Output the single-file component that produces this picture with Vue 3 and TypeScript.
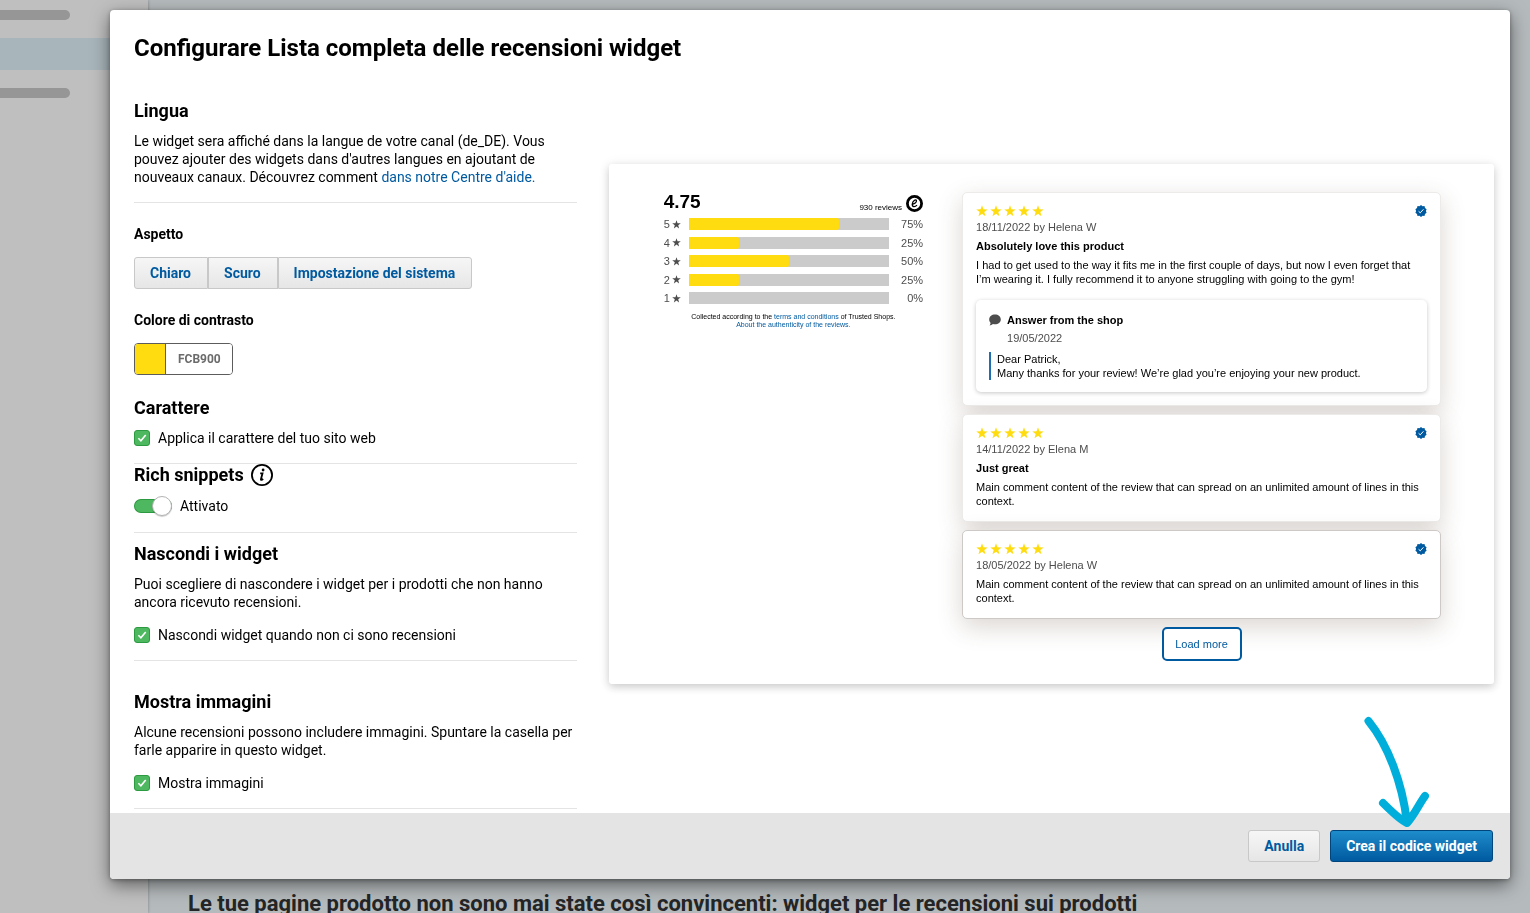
<script setup lang="ts">
import { ref } from 'vue'

interface Review {
  meta: string
  title?: string
  text: string
  answer?: { date: string; lines: string[] }
  outlined?: boolean
}

const themes = ['Chiaro', 'Scuro', 'Impostazione del sistema']
const useSiteFont = ref(true)
const richSnippets = ref(true)
const hideEmpty = ref(true)
const showImages = ref(true)
const contrast = ref('FCB900')

const ratings = [
  { stars: 5, percent: 75 },
  { stars: 4, percent: 25 },
  { stars: 3, percent: 50 },
  { stars: 2, percent: 25 },
  { stars: 1, percent: 0 },
]

const comment = 'Main comment content of the review that can spread on an unlimited amount of lines in this context.'
const reviews: Review[] = [
  {
    meta: '18/11/2022 by Helena W',
    title: 'Absolutely love this product',
    text: 'I had to get used to the way it fits me in the first couple of days, but now I even forget that I’m wearing it. I fully recommend it to anyone struggling with going to the gym!',
    answer: {
      date: '19/05/2022',
      lines: ['Dear Patrick,', 'Many thanks for your review! We’re glad you’re enjoying your new product.'],
    },
  },
  { meta: '14/11/2022 by Elena M', title: 'Just great', text: comment },
  { meta: '18/05/2022 by Helena W', text: comment, outlined: true },
]

const starPath = 'M6 0.3 L7.4 4.3 L11.7 4.4 L8.3 7 L9.5 11.2 L6 8.7 L2.5 11.2 L3.7 7 L0.3 4.4 L4.6 4.3 Z'
</script>

<template>
  <div class="page">
    <aside class="sidebar">
      <span class="stub"></span>
      <span class="active"></span>
      <span class="stub"></span>
    </aside>
    <main class="content">
      <h1>Le tue pagine prodotto non sono mai state così convincenti: widget per le recensioni sui prodotti</h1>
    </main>

    <div class="overlay">
      <div class="dialog" role="dialog" aria-labelledby="dialog-title">
        <header class="head">
          <h2 id="dialog-title">Configurare Lista completa delle recensioni widget</h2>
        </header>

        <div class="body">
          <form class="settings" @submit.prevent>
            <section class="ruled">
              <h3>Lingua</h3>
              <p>
                Le widget sera affiché dans la langue de votre canal (de_DE). Vous pouvez ajouter des widgets dans
                d'autres langues en ajoutant de nouveaux canaux. Découvrez comment
                <a href="#">dans notre Centre d'aide.</a>
              </p>
            </section>

            <section class="field">
              <h4>Aspetto</h4>
              <div class="segments">
                <button v-for="t in themes" :key="t" type="button">{{ t }}</button>
              </div>
            </section>

            <section class="field">
              <h4><label for="contrast">Colore di contrasto</label></h4>
              <div class="color">
                <span class="swatch"></span>
                <input id="contrast" v-model="contrast" type="text" />
              </div>
            </section>

            <section class="ruled font">
              <h3>Carattere</h3>
              <label class="check"><input v-model="useSiteFont" type="checkbox" /><svg viewBox="0 0 16 16"><path d="M4.4 8.2 L6.9 10.8 L11.7 4.9" /></svg>Applica il carattere del tuo sito web</label>
            </section>

            <section class="ruled">
              <h3 class="with-icon">
                Rich snippets
                <svg class="info" viewBox="0 0 22 22">
                  <circle cx="11" cy="11" r="10.1" />
                  <circle class="solid" cx="12.1" cy="6" r="1.4" />
                  <path d="M9.2 9.3 H11.5 L9.9 15.4 Q9.8 16.6 12.2 15" />
                </svg>
              </h3>
              <label class="toggle"><input v-model="richSnippets" type="checkbox" role="switch" /><span class="track"></span>Attivato</label>
            </section>

            <section class="ruled hide">
              <h3>Nascondi i widget</h3>
              <p>Puoi scegliere di nascondere i widget per i prodotti che non hanno ancora ricevuto recensioni.</p>
              <label class="check"><input v-model="hideEmpty" type="checkbox" /><svg viewBox="0 0 16 16"><path d="M4.4 8.2 L6.9 10.8 L11.7 4.9" /></svg>Nascondi widget quando non ci sono recensioni</label>
            </section>

            <section class="ruled images">
              <h3>Mostra immagini</h3>
              <p>Alcune recensioni possono includere immagini. Spuntare la casella per farle apparire in questo widget.</p>
              <label class="check"><input v-model="showImages" type="checkbox" /><svg viewBox="0 0 16 16"><path d="M4.4 8.2 L6.9 10.8 L11.7 4.9" /></svg>Mostra immagini</label>
            </section>
          </form>

          <div class="preview">
            <div class="summary">
              <div class="score">
                <strong>4.75</strong>
                <span>930 reviews</span>
                <svg class="mark" viewBox="0 0 17 17">
                  <circle cx="8.5" cy="8.5" r="7.1" />
                  <path d="M5.6 9.3 C8.6 9.2 10.8 7.4 10.4 5.5 C9.9 4 6.5 5.8 6.3 9.2 C6.2 12.3 9 12.1 11 10.1" />
                </svg>
              </div>
              <div class="bars">
                <div v-for="r in ratings" :key="r.stars" class="bar-row">
                  <span class="bar-label">{{ r.stars }}<svg viewBox="0 0 12 12"><path :d="starPath" /></svg></span>
                  <span class="bar"><span class="fill" :style="{ width: r.percent + '%' }"></span></span>
                  <span class="percent">{{ r.percent }}%</span>
                </div>
              </div>
              <p class="legal">
                Collected according to the <a href="#">terms and conditions</a> of Trusted Shops.<br />
                <a href="#">About the authenticity of the reviews.</a>
              </p>
            </div>

            <div class="reviews">
              <article v-for="r in reviews" :key="r.meta" class="review" :class="{ outlined: r.outlined }">
                <div class="top">
                  <span class="stars">
                    <svg v-for="n in 5" :key="n" viewBox="0 0 12 12"><path :d="starPath" /></svg>
                  </span>
                  <svg class="verified" viewBox="0 0 12 12">
                    <path d="M6 0 L7.5 1.3 L9.5 1 L10 2.9 L11.6 4.2 L10.9 6 L11.6 7.8 L10 9.1 L9.5 11 L7.5 10.7 L6 12 L4.5 10.7 L2.5 11 L2 9.1 L0.4 7.8 L1.1 6 L0.4 4.2 L2 2.9 L2.5 1 L4.5 1.3 Z" />
                    <path class="tick" d="M3.6 6.3 L5.3 7.8 L8.4 4.3" />
                  </svg>
                </div>
                <div class="meta">{{ r.meta }}</div>
                <h5 v-if="r.title">{{ r.title }}</h5>
                <p>{{ r.text }}</p>
                <div v-if="r.answer" class="answer">
                  <svg viewBox="0 0 12 12"><path d="M6 0.5 C9.3 0.5 11.8 2.6 11.8 5.4 C11.8 8.2 9.3 10.3 6 10.3 C5.3 10.3 4.6 10.2 4 10 C3 10.9 1.6 11.4 0.6 11.4 C1.3 10.6 1.6 9.7 1.6 8.8 C0.7 7.9 0.2 6.7 0.2 5.4 C0.2 2.6 2.7 0.5 6 0.5 Z" /></svg>
                  <div class="answer-head">
                    <strong>Answer from the shop</strong>
                    <span>{{ r.answer.date }}</span>
                  </div>
                  <blockquote>
                    <div v-for="line in r.answer.lines" :key="line">{{ line }}</div>
                  </blockquote>
                </div>
              </article>
              <button class="more" type="button">Load more</button>
            </div>
          </div>
        </div>

        <footer class="foot">
          <button class="cancel" type="button">Anulla</button>
          <button class="create" type="button">Crea il codice widget</button>
          <svg class="arrow" viewBox="0 0 66 112">
            <path d="M4.5 5 C24 29 38 66 43 106 M19 87 C28 96 36 104 43 107 C51 98 55 88 61 80" />
          </svg>
        </footer>
      </div>
    </div>
  </div>
</template>

<style>
body {
  margin: 0;
}
</style>

<style scoped>
*, *::after {
  box-sizing: border-box;
}
h1, h2, h3, h4, h5, p, blockquote {
  margin: 0;
}
button, input {
  font: inherit;
}
a {
  color: #005aa0;
  text-decoration: none;
}
.page {
  display: flex;
  height: 100vh;
  overflow: hidden;
  font-family: Roboto, "Liberation Sans", sans-serif;
  font-size: 14px;
  line-height: 18px;
  color: #000;
  background: #b5babc;
}
.sidebar {
  display: flex;
  flex-direction: column;
  gap: 18px;
  width: 148px;
  padding-top: 10px;
  background: #bfbfbf;
  box-shadow: 0 0 3px rgba(0, 0, 0, 0.3);
}
.stub {
  width: 70px;
  height: 10px;
  border-radius: 0 5px 5px 0;
  background: #969696;
}
.active {
  height: 32px;
  background: #a8b5ba;
}
.content {
  flex: 1;
  display: flex;
  flex-direction: column;
  justify-content: flex-end;
  padding-left: 40px;
}
.content h1 {
  font-size: 22px;
  line-height: 18px;
  color: #242526;
  white-space: nowrap;
}
.overlay {
  position: fixed;
  inset: 0;
  display: flex;
  padding: 10px 20px 34px 110px;
}
.dialog {
  position: relative;
  flex: 1;
  display: flex;
  flex-direction: column;
  min-width: 0;
  border-radius: 4px;
  background: #fff;
  box-shadow: 0 6px 18px rgba(0, 0, 0, 0.5), 0 1px 4px rgba(0, 0, 0, 0.3);
}
.head {
  padding: 24px 24px 38px;
}
.head h2 {
  font-size: 24px;
  line-height: 28px;
}
.body {
  flex: 1;
  min-height: 0;
  overflow: hidden;
  display: grid;
  grid-template-columns: 1fr 2fr;
  align-items: start;
  gap: 32px;
  padding: 0 16px 0 24px;
}
h3 {
  margin-bottom: 10px;
  font-size: 18px;
  line-height: 22px;
}
h4 {
  margin-bottom: 14px;
  font-size: 14px;
}
.ruled {
  padding-bottom: 16px;
  border-bottom: 1px solid #e4e4e4;
}
.field {
  margin-top: 22px;
}
.font {
  margin-top: 22px;
}
.hide {
  margin-top: 10px;
}
.images {
  margin-top: 30px;
}
.with-icon {
  display: flex;
  gap: 7px;
}
.info {
  width: 22px;
  height: 22px;
  fill: none;
  stroke: #000;
  stroke-width: 1.8;
}
.info .solid {
  fill: #000;
  stroke: none;
}
.segments {
  display: flex;
}
.segments button,
.cancel {
  height: 32px;
  padding: 0 15px;
  border: 1px solid #c8c8c8;
  background: linear-gradient(#f6f6f6, #e6e6e6);
  color: #005aa0;
  font-weight: 700;
}
.segments button {
  padding-right: 16px;
}
.segments button:first-child {
  border-radius: 3px 0 0 3px;
}
.segments button:last-child {
  border-radius: 0 3px 3px 0;
}
.color {
  display: flex;
  width: 99px;
  height: 32px;
  border: 1px solid #5c5c5c;
  border-radius: 4px;
  overflow: hidden;
}
.swatch {
  flex: none;
  width: 31px;
  border-right: 1px solid #5c5c5c;
  background: #ffdc0f;
}
.color input {
  flex: 1;
  min-width: 0;
  padding: 0 0 0 12px;
  border: 0;
  outline: 0;
  font-size: 12px;
  font-weight: 700;
  color: #6b6b6b;
}
.check {
  position: relative;
  display: flex;
  align-items: center;
  gap: 8px;
}
p + .check {
  margin-top: 15px;
}
.check input {
  appearance: none;
  width: 16px;
  height: 16px;
  margin: 0;
  border: 1px solid #9a9a9a;
  border-radius: 3px;
  background: #fff;
}
.check input:checked {
  border-color: #2c9a40;
  background: #4db85f;
}
.check svg {
  position: absolute;
  left: 0;
  width: 16px;
  height: 16px;
  fill: none;
  stroke: #fff;
  stroke-width: 1.6;
}
.toggle {
  position: relative;
  display: flex;
  align-items: center;
  gap: 8px;
  line-height: 20px;
}
.toggle input {
  position: absolute;
  opacity: 0;
}
.track {
  display: flex;
  align-items: center;
  width: 38px;
  height: 14px;
  border: 1px solid #b0b0b0;
  border-radius: 7px;
  background: #ccc;
}
.track::after {
  content: "";
  flex: none;
  width: 20px;
  height: 20px;
  border: 1px solid #b4b4b4;
  border-radius: 50%;
  background: #fff;
  box-shadow: 0 1px 1px rgba(0, 0, 0, 0.2);
}
.toggle input:checked + .track {
  justify-content: flex-end;
  border-width: 1px 0 1px 1px;
  border-color: #2c9a40;
  background: #4db85f;
}
.preview {
  display: grid;
  grid-template-columns: 13fr 24fr;
  gap: 39px;
  margin-top: 64px;
  padding: 28px 53px 23px 55px;
  border-radius: 3px;
  box-shadow: 0 3px 8px rgba(0, 0, 0, 0.18), 0 0 14px rgba(0, 0, 0, 0.05);
  font-family: "Liberation Sans", sans-serif;
  font-size: 11px;
  line-height: 14px;
}
.score {
  display: flex;
  align-items: flex-end;
  gap: 4px;
  height: 20px;
  margin-bottom: 6px;
}
.score strong {
  flex: 1;
  font-size: 19px;
  line-height: 20px;
}
.score span {
  font-size: 8px;
  line-height: 9px;
}
.mark {
  width: 17px;
  height: 17px;
  fill: none;
  stroke: #000;
  stroke-width: 2.8;
}
.mark path {
  stroke-width: 1.3;
}
.bars {
  display: flex;
  flex-direction: column;
  justify-content: space-between;
  height: 86px;
}
.bar-row {
  display: flex;
  height: 12px;
  line-height: 12px;
  color: #4d4d4d;
}
.bar-label {
  display: flex;
  align-items: center;
  gap: 2px;
  width: 25px;
}
.bar-label svg {
  width: 9px;
  height: 9px;
  fill: #4d4d4d;
}
.bar {
  flex: 1;
  background: #cbcbcb;
}
.fill {
  display: block;
  height: 12px;
  border-radius: 0 2px 2px 0;
  background: #ffdc0f;
}
.percent {
  width: 34px;
  text-align: right;
}
.legal {
  margin-top: 9px;
  font-size: 7px;
  line-height: 8px;
  text-align: center;
  white-space: nowrap;
}
.reviews {
  display: flex;
  flex-direction: column;
  gap: 8px;
}
.review {
  padding: 12px 13px 13px;
  border: 1px solid #ecebea;
  border-radius: 5px;
  background: #fff;
  box-shadow: 0 8px 24px rgba(90, 70, 50, 0.22);
}
.review.outlined {
  border-color: #cdc9c6;
}
.top {
  display: flex;
  justify-content: space-between;
  height: 12px;
  margin-bottom: 3px;
}
.stars {
  display: flex;
  gap: 2px;
}
.stars svg {
  width: 12px;
  height: 12px;
  fill: #ffdc0f;
}
.verified {
  width: 12px;
  height: 12px;
  fill: #005aa0;
}
.tick {
  fill: none;
  stroke: #fff;
}
.meta {
  color: #4d4d4d;
}
h5 {
  margin-top: 5px;
  font-size: 11px;
}
.review p {
  margin-top: 5px;
  padding-right: 6px;
}
.answer {
  display: grid;
  grid-template-columns: 12px 1fr;
  column-gap: 6px;
  margin-top: 14px;
  padding: 13px 13px 12px;
  border-radius: 5px;
  background: #fff;
  box-shadow: 0 1px 4px rgba(0, 0, 0, 0.22);
}
.answer svg {
  width: 12px;
  height: 12px;
  margin-top: 1px;
  fill: #4d4d4d;
}
.answer-head {
  display: flex;
  flex-direction: column;
  gap: 4px;
}
.answer-head span {
  color: #4d4d4d;
}
blockquote {
  grid-column: 1 / -1;
  margin-top: 7px;
  padding-left: 6px;
  border-left: 2px solid #1f6fb0;
}
.more {
  align-self: center;
  width: 80px;
  height: 34px;
  padding: 0;
  border: 2px solid #005aa0;
  border-radius: 5px;
  background: #fff;
  color: #005aa0;
}
.foot {
  display: flex;
  justify-content: flex-end;
  gap: 10px;
  padding: 17px;
  border-radius: 0 0 4px 4px;
  background: #e4e4e4;
}
.cancel,
.create {
  border-radius: 3px;
}
.create {
  height: 32px;
  padding: 0 15px;
  border: 1px solid #00457e;
  background: linear-gradient(#1e8ccb, #005aa0);
  color: #fff;
  font-weight: 700;
}
.arrow {
  position: absolute;
  right: 80px;
  bottom: 51px;
  width: 66px;
  height: 112px;
  fill: none;
  stroke: #00aedb;
  stroke-width: 8;
  stroke-linecap: round;
  stroke-linejoin: round;
  pointer-events: none;
}
</style>
